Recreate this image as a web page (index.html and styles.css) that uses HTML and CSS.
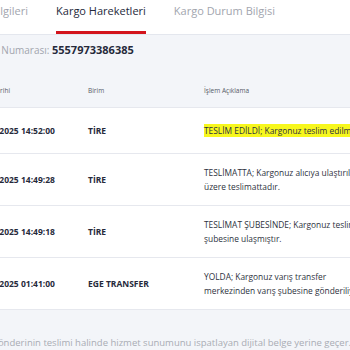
FILE: index.html
```html
<!DOCTYPE html>
<html lang="tr">
<head>
    <meta charset="UTF-8">
    <meta name="viewport" content="width=device-width, initial-scale=1.0">
    <title>Kargo Takip</title>
    <link rel="stylesheet" href="styles.css">
</head>
<body>
    <div class="page">
        <nav class="tabs">
            <a class="tab">Gönderi Bilgileri</a>
            <a class="tab active">Kargo Hareketleri</a>
            <a class="tab">Kargo Durum Bilgisi</a>
        </nav>

        <div class="panel">
            <p class="tracking">Gönderi Numarası: <b>5557973386385</b></p>

            <div class="moves">
                <div class="row head">
                    <span>İşlem Tarihi</span>
                    <span>Birim</span>
                    <span>İşlem Açıklama</span>
                </div>
                <div class="row">
                    <span class="date">18.04.2025 14:52:00</span>
                    <span class="unit">TİRE</span>
                    <span class="desc"><mark>TESLİM EDİLDİ; Kargonuz teslim edilmiştir.</mark></span>
                </div>
                <div class="row">
                    <span class="date">18.04.2025 14:49:28</span>
                    <span class="unit">TİRE</span>
                    <span class="desc">TESLİMATTA; Kargonuz alıcıya ulaştırılmak üzere teslimattadır.</span>
                </div>
                <div class="row">
                    <span class="date">18.04.2025 14:49:18</span>
                    <span class="unit">TİRE</span>
                    <span class="desc">TESLİMAT ŞUBESİNDE; Kargonuz teslimat şubesine ulaşmıştır.</span>
                </div>
                <div class="row">
                    <span class="date">18.04.2025 01:41:00</span>
                    <span class="unit">EGE TRANSFER</span>
                    <span class="desc">YOLDA; Kargonuz varış transfer merkezinden varış şubesine gönderiliyor.</span>
                </div>
            </div>

            <p class="note">Gönderinin teslimi halinde hizmet sunumunu ispatlayan dijital belge yerine geçer.</p>
        </div>
    </div>
</body>
</html>
```

FILE: styles.css
```css
body {
    margin: 0;
    overflow: hidden;
    font-family: "Open Sans", sans-serif;
    background: #f3f5f9;
    color: #262a3b;
}
.page {
    margin-left: -60px;
    width: 520px;
}
.tabs {
    display: flex;
    gap: 28px;
    padding-left: 6px;
    background: #fff;
    border-bottom: 1px solid #e4e7ee;
}
.tab {
    padding: 4px 0 13px;
    font-size: 11px;
    line-height: 14px;
    font-weight: 500;
    color: #a2a5ae;
    border-bottom: 3px solid transparent;
}
.tab.active {
    color: #262a3b;
    border-bottom-color: #d3141c;
}
.panel {
    background: #f3f5f9;
}
.tracking {
    margin: 0;
    padding: 9px 0 0 21px;
    font-size: 10px;
    line-height: 12px;
    color: #a2a5ae;
}
.tracking b {
    color: #262a3b;
    font-size: 11px;
    font-weight: 700;
}
.row {
    display: grid;
    grid-template-columns: 113px 116px 171px;
    align-items: center;
    box-sizing: border-box;
    min-height: 46px;
    padding: 12px 0 11px 35px;
    background: #fff;
    border-bottom: 1px solid #e6e8ee;
    font-size: 8.4px;
    line-height: 14px;
}
.row.head {
    min-height: 0;
    padding: 31px 0 12px 35px;
    background: #f3f5f9;
    font-size: 6.5px;
    line-height: 8px;
    color: #555a66;
}
.date, .unit {
    font-size: 8.5px;
    font-weight: 700;
}
.desc {
    color: #2e3240;
}
mark {
    background: #f7f71d;
    padding: 1px 0;
    color: #2e3240;
    white-space: nowrap;
}
.note {
    margin: 0;
    padding: 26px 0 0 51px;
    font-size: 9.5px;
    line-height: 14px;
    color: #a9acb4;
}
```
